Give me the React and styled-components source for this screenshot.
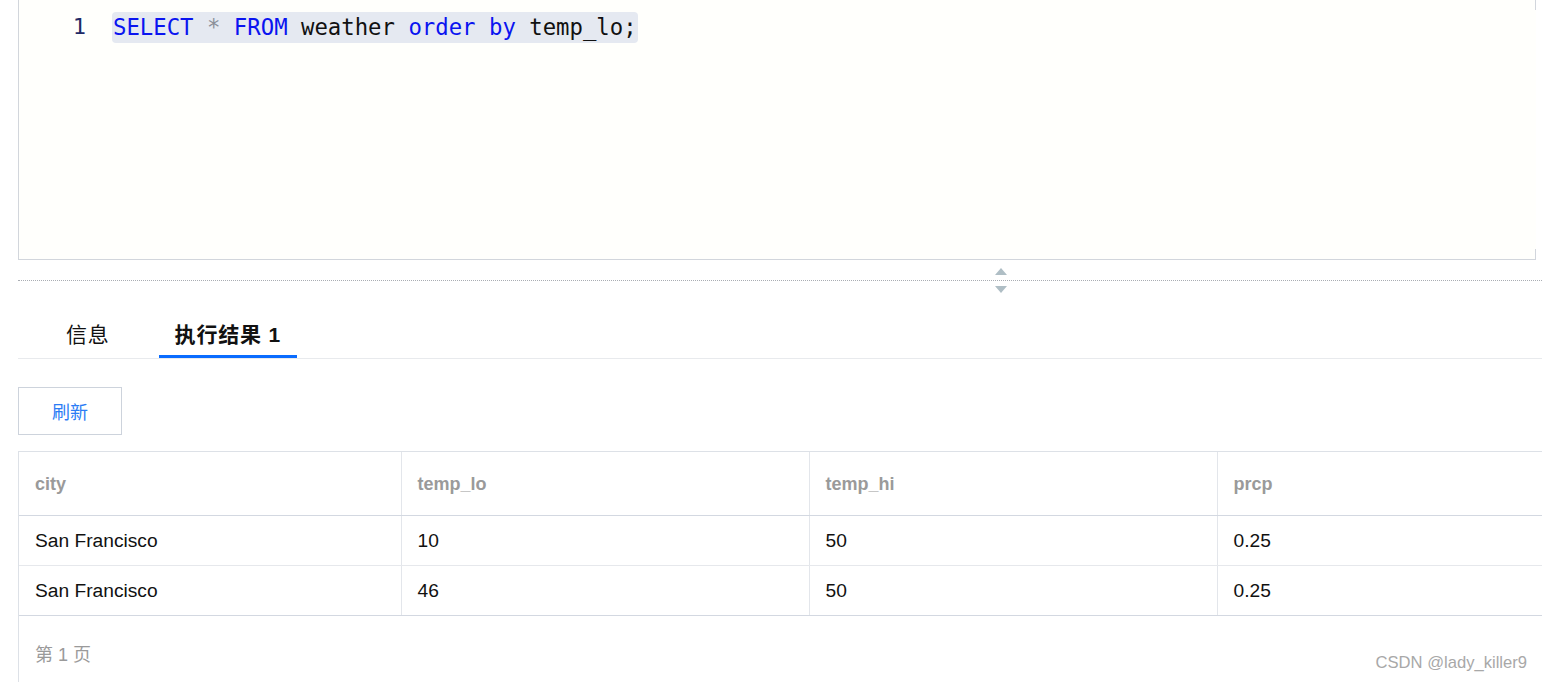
import styled, { createGlobalStyle } from 'styled-components';

const GlobalStyle = createGlobalStyle`
    html, body {
        margin: 0;
        padding: 0;
        background: #ffffff;
        overflow: hidden;
    }
    body {
        width: 1542px;
        height: 682px;
        font-family: "Liberation Sans", "Noto Sans CJK SC", sans-serif;
    }
`;

const Page = styled.div`
    position: relative;
    display: flex;
    flex-direction: column;
    padding-left: 18px;
    height: 682px;
    box-sizing: border-box;
`;

const EditorPanel = styled.div`
    display: flex;
    align-items: flex-start;
    height: 260px;
    box-sizing: border-box;
    margin-right: 6px;
    border-left: 1px solid #d2d6dc;
    border-bottom: 1px solid #d2d6dc;
    padding-top: 12px;
    background:
        linear-gradient(#d2d6dc, #d2d6dc) right top / 1px 10px no-repeat,
        linear-gradient(#d2d6dc, #d2d6dc) right bottom / 1px 10px no-repeat,
        #fffffc;
`;

const Gutter = styled.div`
    width: 67px;
    text-align: right;
    font-family: "DejaVu Sans Mono", "Liberation Mono", monospace;
    font-size: 22px;
    line-height: 30px;
    color: #1f2a66;
`;

const CodeLine = styled.div`
    margin-left: 26px;
    font-family: "DejaVu Sans Mono", "Liberation Mono", monospace;
    font-size: 22.3px;
    line-height: 30px;
    height: 31px;
    color: #111111;
    background: #e5e9f1;
    border-radius: 4px;
    padding: 0 1px;
    white-space: pre;
`;

const Token = styled.span`
    color: ${p => (p.$kind === 'kw' ? '#0a14f0' : p.$kind === 'op' ? '#8b9099' : '#111111')};
`;

const Resizer = styled.div`
    display: flex;
    flex-direction: column;
    margin-top: 8px;
`;

const Triangle = styled.div`
    margin-left: 977px;
    width: 0;
    height: 0;
    border-left: 6px solid transparent;
    border-right: 6px solid transparent;
    ${p => (p.$up ? 'border-bottom: 7px solid #afbec5;' : 'border-top: 7px solid #afbec5;')}
`;

const DottedLine = styled.div`
    margin: 5px 0;
    border-top: 1px dotted #a9adb3;
`;

const TabBar = styled.div`
    display: flex;
    gap: 33px;
    margin-top: 20px;
    padding-left: 32px;
    border-bottom: 1px solid #e8eaed;
`;

const Tab = styled.div`
    padding: 8px 16px 6px;
    font-size: 21px;
    letter-spacing: 0.8px;
    line-height: 28px;
    color: #111111;
    font-weight: ${p => (p.$active ? 700 : 400)};
    border-bottom: 3px solid ${p => (p.$active ? '#0a6cff' : 'transparent')};
`;

const Toolbar = styled.div`
    display: flex;
    margin-top: 28px;
`;

const Button = styled.button`
    width: 104px;
    height: 48px;
    background: #ffffff;
    border: 1px solid #cdd3dc;
    border-radius: 0;
    color: #2b7cf5;
    font-family: "Liberation Sans", "Noto Sans CJK SC", sans-serif;
    font-size: 18px;
`;

const TableWrap = styled.div`
    margin-top: 16px;
    flex: 1;
    border-left: 1px solid #dde1e7;
    width: 1600px;
`;

const Table = styled.table`
    width: 1600px;
    border-collapse: collapse;
    table-layout: fixed;
`;

const HeadCell = styled.th`
    height: 62px;
    padding: 1px 16px 0;
    text-align: left;
    font-size: 18px;
    font-weight: 700;
    color: #9a9a9a;
    border-top: 1px solid #dde1e7;
    border-bottom: 1px solid #d3d8e1;
    border-left: ${p => (p.$first ? 'none' : '1px solid #e3e6eb')};
`;

const Cell = styled.td`
    height: 49px;
    padding: 0 16px;
    font-size: 19.2px;
    color: #111111;
    border-bottom: 1px solid ${p => (p.$last ? '#d3d8e1' : '#e6e8ec')};
    border-left: ${p => (p.$first ? 'none' : '1px solid #e3e6eb')};
`;

const Footer = styled.div`
    padding: 24px 16px 0;
    font-size: 18px;
    color: #9a9a9a;
`;

const Watermark = styled.div`
    position: absolute;
    right: 15px;
    bottom: 9px;
    font-size: 16.6px;
    color: #a8a8a8;
`;

const columns = [
    { name: 'city', width: 382 },
    { name: 'temp_lo', width: 408 },
    { name: 'temp_hi', width: 408 },
    { name: 'prcp', width: 402 },
];

const rows = [
    ['San Francisco', '10', '50', '0.25'],
    ['San Francisco', '46', '50', '0.25'],
];

function App() {
    return (
        <Page>
            <GlobalStyle />

            <EditorPanel>
                <Gutter>1</Gutter>
                <CodeLine>
                    <Token $kind="kw">SELECT</Token> <Token $kind="op">*</Token> <Token $kind="kw">FROM</Token> weather <Token $kind="kw">order</Token> <Token $kind="kw">by</Token> temp_lo;
                </CodeLine>
            </EditorPanel>

            <Resizer>
                <Triangle $up />
                <DottedLine />
                <Triangle />
            </Resizer>

            <TabBar>
                <Tab>信息</Tab>
                <Tab $active>执行结果 1</Tab>
            </TabBar>

            <Toolbar>
                <Button>刷新</Button>
            </Toolbar>

            <TableWrap>
                <Table>
                    <colgroup>
                        {columns.map(c => <col key={c.name} style={{ width: c.width }} />)}
                    </colgroup>
                    <thead>
                        <tr>
                            {columns.map((c, i) => <HeadCell key={c.name} $first={i === 0}>{c.name}</HeadCell>)}
                        </tr>
                    </thead>
                    <tbody>
                        {rows.map((row, r) => (
                            <tr key={r}>
                                {row.map((v, i) => (
                                    <Cell key={i} $first={i === 0} $last={r === rows.length - 1}>{v}</Cell>
                                ))}
                            </tr>
                        ))}
                    </tbody>
                </Table>
                <Footer>第 1 页</Footer>
            </TableWrap>

            <Watermark>CSDN @lady_killer9</Watermark>
        </Page>
    );
}

export default App;
